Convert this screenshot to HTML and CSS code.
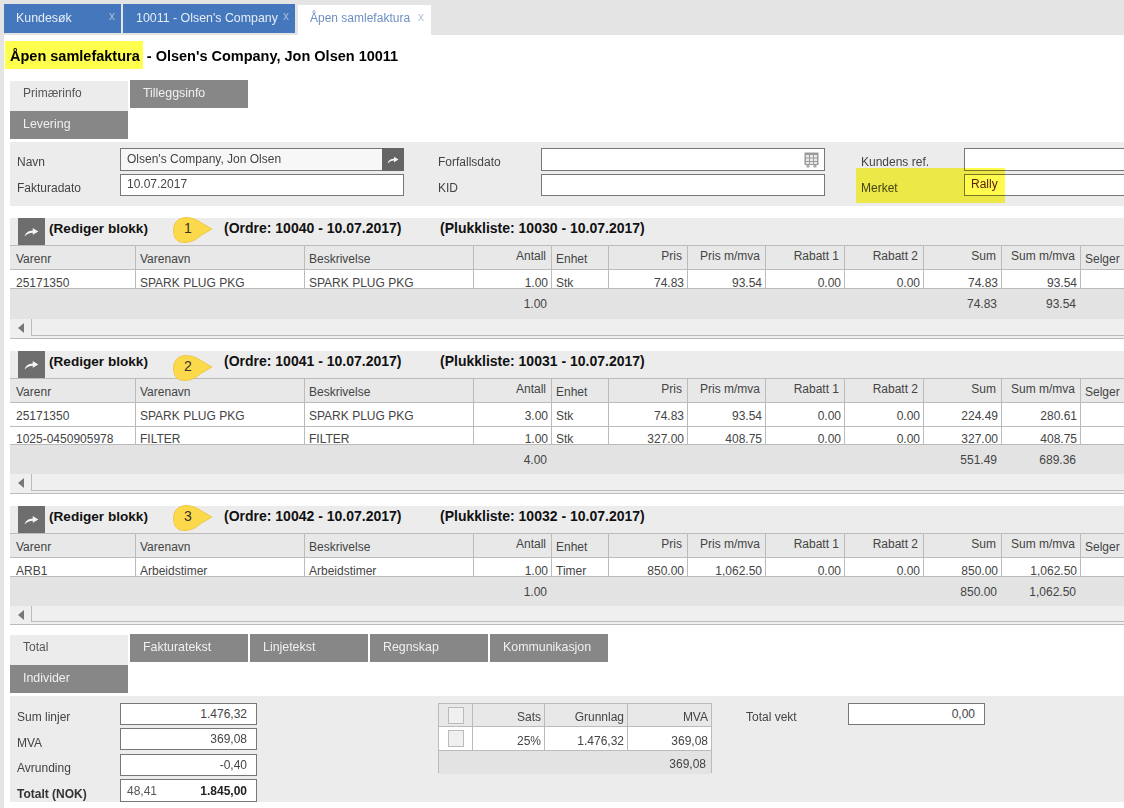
FILE: index.html
```html
<!DOCTYPE html>
<html lang="no">
<head>
<meta charset="utf-8">
<title>Åpen samlefaktura</title>
<link rel="stylesheet" href="styles.css">
</head>
<body>
<nav class="topbar">
  <a class="ttab ttab-a">Kundesøk<span class="tx">x</span></a>
  <a class="ttab ttab-b">10011 - Olsen's Company<span class="tx">x</span></a>
  <a class="ttab ttab-on">Åpen samlefaktura<span class="tx">x</span></a>
</nav>
<main class="main">
  <h1 class="title"><span class="mark">Åpen samlefaktura</span> - Olsen's Company, Jon Olsen 10011</h1>

  <div class="subtabs subtabs-top">
    <a class="stab stab-on">Primærinfo</a>
    <a class="stab">Tilleggsinfo</a>
    <a class="stab">Levering</a>
  </div>

  <section class="panel form-top">
    <label class="lab">Navn</label>
    <div class="inp inp-grey"><span>Olsen's Company, Jon Olsen</span><span class="inp-btn"><svg class="arrow" viewBox="0 0 12 8"><path d="M.5 7.500C1.200 4.500 3.500 2.800 7 2.700V.8L11.500 3.500 7 6.200V4.500C4.500 4.500 2.500 5.500.5 7.500Z"/></svg></span></div>
    <label class="lab">Forfallsdato</label>
    <div class="inp inp-cal"><svg class="cal" viewBox="0 0 15 16"><path d="M.5 .5h14v12.500H.5z" fill="#9b9b9b"/><path d="M2 3h3v2.500H2zM6 3h3v2.500H6zM10 3h3v2.500h-3zM2 6.500h3V9H2zM6 6.500h3V9H6zM10 6.500h3V9h-3zM2 10h3v2H2zM6 10h3v2H6zM10 10h3v2h-3z" fill="#e9e9e9"/><path d="M2.500 13h3v2.500h-3zM9.500 13h3v2.500h-3z" fill="#a8a8a8"/></svg></div>
    <label class="lab">Kundens ref.</label>
    <div class="inp"></div>
    <label class="lab">Fakturadato</label>
    <div class="inp">10.07.2017</div>
    <label class="lab">KID</label>
    <div class="inp"></div>
    <label class="lab">Merket</label>
    <div class="inp inp-pad">Rally</div>
    <div class="hilite"></div>
  </section>

  <section class="block">
    <header class="bhead">
      <span class="bbtn"><svg class="arrow" viewBox="0 0 12 8"><path d="M.5 7.500C1.200 4.500 3.500 2.800 7 2.700V.8L11.500 3.500 7 6.200V4.500C4.500 4.500 2.500 5.500.5 7.500Z"/></svg></span>
      <b class="bt bt-edit">(Rediger blokk)</b>
      <b class="bt bt-ord">(Ordre: 10040 - 10.07.2017)</b>
      <b class="bt">(Plukkliste: 10030 - 10.07.2017)</b>
      <span class="call call-1"><svg class="call-shape" viewBox="0 0 40 26"><path d="M13 .5C18 .5 23 2 27 5L39 12 27 19C23 23.500 17 25.500 11 25.500 4 25.500 .5 21 .5 13 .5 6 5 .5 13 .5Z"/></svg><span class="call-n">1</span></span>
    </header>
    <div class="row row-h">
      <span class="c">Varenr</span><span class="c">Varenavn</span><span class="c">Beskrivelse</span><span class="c r up">Antall</span><span class="c">Enhet</span><span class="c r up">Pris</span><span class="c r up">Pris m/mva</span><span class="c r up">Rabatt 1</span><span class="c r up">Rabatt 2</span><span class="c r up">Sum</span><span class="c r up">Sum m/mva</span><span class="c">Selger</span>
    </div>
    <div class="row row-cut">
      <span class="c">25171350</span><span class="c">SPARK PLUG PKG</span><span class="c">SPARK PLUG PKG</span><span class="c n">1.00</span><span class="c">Stk</span><span class="c n">74.83</span><span class="c n">93.54</span><span class="c n">0.00</span><span class="c n">0.00</span><span class="c n">74.83</span><span class="c n">93.54</span><span class="c"></span>
    </div>
    <div class="row row-f">
      <span class="f"></span><span class="f"></span><span class="f"></span><span class="f r">1.00</span><span class="f"></span><span class="f"></span><span class="f"></span><span class="f"></span><span class="f"></span><span class="f r">74.83</span><span class="f r">93.54</span><span class="f"></span>
    </div>
    <div class="scroll"><span class="sarrow"></span><span class="strack"></span></div>
  </section>

  <section class="block block-2">
    <header class="bhead">
      <span class="bbtn"><svg class="arrow" viewBox="0 0 12 8"><path d="M.5 7.500C1.200 4.500 3.500 2.800 7 2.700V.8L11.500 3.500 7 6.200V4.500C4.500 4.500 2.500 5.500.5 7.500Z"/></svg></span>
      <b class="bt bt-edit">(Rediger blokk)</b>
      <b class="bt bt-ord">(Ordre: 10041 - 10.07.2017)</b>
      <b class="bt">(Plukkliste: 10031 - 10.07.2017)</b>
      <span class="call call-2"><svg class="call-shape" viewBox="0 0 40 26"><path d="M13 .5C18 .5 23 2 27 5L39 12 27 19C23 23.500 17 25.500 11 25.500 4 25.500 .5 21 .5 13 .5 6 5 .5 13 .5Z"/></svg><span class="call-n">2</span></span>
    </header>
    <div class="row row-h">
      <span class="c">Varenr</span><span class="c">Varenavn</span><span class="c">Beskrivelse</span><span class="c r up">Antall</span><span class="c">Enhet</span><span class="c r up">Pris</span><span class="c r up">Pris m/mva</span><span class="c r up">Rabatt 1</span><span class="c r up">Rabatt 2</span><span class="c r up">Sum</span><span class="c r up">Sum m/mva</span><span class="c">Selger</span>
    </div>
    <div class="row row-b">
      <span class="c">25171350</span><span class="c">SPARK PLUG PKG</span><span class="c">SPARK PLUG PKG</span><span class="c n">3.00</span><span class="c">Stk</span><span class="c n">74.83</span><span class="c n">93.54</span><span class="c n">0.00</span><span class="c n">0.00</span><span class="c n">224.49</span><span class="c n">280.61</span><span class="c"></span>
    </div>
    <div class="row row-cut row-cut-short">
      <span class="c">1025-0450905978</span><span class="c">FILTER</span><span class="c">FILTER</span><span class="c n">1.00</span><span class="c">Stk</span><span class="c n">327.00</span><span class="c n">408.75</span><span class="c n">0.00</span><span class="c n">0.00</span><span class="c n">327.00</span><span class="c n">408.75</span><span class="c"></span>
    </div>
    <div class="row row-f">
      <span class="f"></span><span class="f"></span><span class="f"></span><span class="f r">4.00</span><span class="f"></span><span class="f"></span><span class="f"></span><span class="f"></span><span class="f"></span><span class="f r">551.49</span><span class="f r">689.36</span><span class="f"></span>
    </div>
    <div class="scroll"><span class="sarrow"></span><span class="strack"></span></div>
  </section>

  <section class="block block-3">
    <header class="bhead">
      <span class="bbtn"><svg class="arrow" viewBox="0 0 12 8"><path d="M.5 7.500C1.200 4.500 3.500 2.800 7 2.700V.8L11.500 3.500 7 6.200V4.500C4.500 4.500 2.500 5.500.5 7.500Z"/></svg></span>
      <b class="bt bt-edit">(Rediger blokk)</b>
      <b class="bt bt-ord">(Ordre: 10042 - 10.07.2017)</b>
      <b class="bt">(Plukkliste: 10032 - 10.07.2017)</b>
      <span class="call call-3"><svg class="call-shape" viewBox="0 0 40 26"><path d="M13 .5C18 .5 23 2 27 5L39 12 27 19C23 23.500 17 25.500 11 25.500 4 25.500 .5 21 .5 13 .5 6 5 .5 13 .5Z"/></svg><span class="call-n">3</span></span>
    </header>
    <div class="row row-h">
      <span class="c">Varenr</span><span class="c">Varenavn</span><span class="c">Beskrivelse</span><span class="c r up">Antall</span><span class="c">Enhet</span><span class="c r up">Pris</span><span class="c r up">Pris m/mva</span><span class="c r up">Rabatt 1</span><span class="c r up">Rabatt 2</span><span class="c r up">Sum</span><span class="c r up">Sum m/mva</span><span class="c">Selger</span>
    </div>
    <div class="row row-cut">
      <span class="c">ARB1</span><span class="c">Arbeidstimer</span><span class="c">Arbeidstimer</span><span class="c n">1.00</span><span class="c">Timer</span><span class="c n">850.00</span><span class="c n">1,062.50</span><span class="c n">0.00</span><span class="c n">0.00</span><span class="c n">850.00</span><span class="c n">1,062.50</span><span class="c"></span>
    </div>
    <div class="row row-f">
      <span class="f"></span><span class="f"></span><span class="f"></span><span class="f r">1.00</span><span class="f"></span><span class="f"></span><span class="f"></span><span class="f"></span><span class="f"></span><span class="f r">850.00</span><span class="f r">1,062.50</span><span class="f"></span>
    </div>
    <div class="scroll"><span class="sarrow"></span><span class="strack"></span></div>
  </section>

  <div class="subtabs subtabs-bottom">
    <a class="stab stab-on">Total</a>
    <a class="stab">Fakturatekst</a>
    <a class="stab">Linjetekst</a>
    <a class="stab">Regnskap</a>
    <a class="stab">Kommunikasjon</a>
    <a class="stab">Individer</a>
  </div>

  <section class="panel totals">
    <div class="tot-col">
      <label class="lab">Sum linjer</label><div class="inp r">1.476,32</div>
      <label class="lab lab-2">MVA</label><div class="inp r">369,08</div>
      <label class="lab lab-3">Avrunding</label><div class="inp r inp-3">-0,40</div>
      <label class="lab lab-b">Totalt (NOK)</label><div class="inp inp-split"><span>48,41</span><b>1.845,00</b></div>
    </div>
    <div class="vat">
      <span class="v vh"><i class="cb"></i></span><span class="v vh r">Sats</span><span class="v vh r">Grunnlag</span><span class="v vh r">MVA</span>
      <span class="v"><i class="cb"></i></span><span class="v r">25%</span><span class="v r">1.476,32</span><span class="v r">369,08</span>
      <span class="vf">369,08</span>
    </div>
    <div class="weight">
      <label class="lab">Total vekt</label><div class="inp r">0,00</div>
    </div>
  </section>
</main>
</body>
</html>
```
FILE: styles.css
```css
* { box-sizing: border-box; }
html, body { margin: 0; height: 808px; overflow: hidden; }
body {
  background: #fff;
  border-left: 4px solid #e4e4e4;
  font: 12px/16px "Liberation Sans", Arial, sans-serif;
  color: #444;
}

/* top tabs */
.topbar {
  display: flex;
  align-items: flex-start;
  height: 35px;
  padding-top: 4px;
  background: #e4e4e4;
}
.ttab {
  position: relative;
  display: block;
  height: 29px;
  background: #4577bc;
  color: #e6edf7;
  line-height: 28px;
  padding-left: 12px;
  margin-right: 2px;
  font-size: 12.4px;
}
.ttab-a { width: 117px; }
.ttab-b { width: 172px; padding-left: 13px; margin-right: 3px; }
.ttab-on {
  width: 133px;
  height: 30px;
  margin-top: 1px;
  background: #fff;
  color: #6f8fc4;
  padding-left: 12px;
  line-height: 26px;
  font-size: 12px;
}
.tx {
  position: absolute;
  right: 6px;
  top: -2px;
  font-size: 12px;
  color: #a9bbdb;
}
.ttab-on .tx { right: 7px; top: -1px; color: #b3c4e0; }

/* main */
.main { padding-left: 6px; overflow: hidden; height: 773px; }
.title {
  margin: 6px 0 11px -5px;
  height: 28px;
  font-size: 14.5px;
  line-height: 30px;
  font-weight: bold;
  color: #000;
  white-space: nowrap;
}
.mark {
  display: inline-block;
  height: 28px;
  padding: 0 3px 0 5px;
  background: #ffff4d;
  vertical-align: top;
}

/* sub tabs */
.subtabs { display: flex; flex-wrap: wrap; align-items: flex-start; column-gap: 2px; }
.subtabs-top { width: 238px; }
.subtabs-bottom { width: 600px; margin-top: 9px; }
.stab {
  display: block;
  width: 118px;
  height: 28px;
  padding-left: 13px;
  background: #878787;
  color: #f0f0f0;
  line-height: 26px;
  font-size: 12.4px;
}
.stab-on {
  height: 30px;
  margin-top: 1px;
  background: #ececec;
  color: #555;
  line-height: 24px;
  font-size: 12px;
}

/* panels */
.panel { background: #ececec; margin-top: 3px; }
.form-top {
  position: relative;
  display: grid;
  grid-template-columns: 103px 284px 103px 284px 103px 284px;
  grid-template-rows: 23px 22px;
  row-gap: 3px;
  height: 64px;
  width: 1114px;
  padding: 6px 0 0 7px;
  overflow: hidden;
}
.form-top .lab:nth-of-type(2),
.form-top .lab:nth-of-type(5) { margin-left: 34px; margin-right: -34px; }
.form-top .lab:nth-of-type(3),
.form-top .lab:nth-of-type(6) { margin-left: 70px; margin-right: -70px; }
.form-top .inp:nth-of-type(2),
.form-top .inp:nth-of-type(5) { margin-left: 34px; margin-right: -34px; }
.form-top .inp:nth-of-type(3),
.form-top .inp:nth-of-type(6) { margin-left: 70px; margin-right: -70px; }

.lab {
  display: flex;
  align-items: center;
  padding-top: 5px;
  white-space: nowrap;
  color: #444;
}
.lab-b { font-weight: bold; color: #333; position: relative; top: 2px; }
.lab-2 { position: relative; top: 1px; }
.lab-3 { position: relative; top: 1px; }
.inp {
  display: flex;
  align-items: center;
  position: relative;
  height: 100%;
  padding: 0 0 2px 6px;
  background: #fff;
  border: 1px solid #777;
  color: #444;
  white-space: nowrap;
}
.inp-grey { background: #f7f7f7; }
.inp-btn {
  position: absolute;
  right: -1px;
  top: -1px;
  bottom: -1px;
  width: 22px;
  display: flex;
  align-items: center;
  justify-content: center;
  background: #646464;
}
.inp-cal { justify-content: flex-end; padding: 0 5px 0 0; }
.cal { width: 15px; height: 16px; }
.inp-pad { color: #5a2020; }
.arrow { width: 12px; height: 8px; fill: #f4f4f4; }
.bbtn .arrow { width: 15px; height: 10px; }
.hilite {
  position: absolute;
  left: 846px;
  top: 26px;
  width: 149px;
  height: 35px;
  background: #fffb4c;
  mix-blend-mode: multiply;
}

/* order blocks */
.block {
  position: relative;
  width: 1114px;
  margin-top: 12px;
  background: #efefef;
  border-bottom: 1px solid #bbb;
}
.bhead {
  position: relative;
  display: flex;
  align-items: flex-start;
  height: 28px;
  padding-left: 8px;
  background: #ececec;
  border-bottom: 1px solid #bbb;
}
.bbtn {
  flex: none;
  display: flex;
  align-items: center;
  justify-content: center;
  width: 27px;
  height: 27px;
  margin-right: 4px;
  background: #6e6e6e;
}
.bt { font-size: 14px; line-height: 21px; color: #111; white-space: nowrap; }
.bt-edit { width: 175px; font-size: 13.6px; }
.bt-ord { width: 216px; }
.call { position: absolute; left: 163px; width: 40px; height: 26px; z-index: 1; }
.call-1 { top: -1px; }
.call-2 { top: 4px; }
.call-3 { top: -1px; }
.call-shape { position: absolute; inset: 0; width: 100%; height: 100%; fill: #fcd94a; stroke: #e8bf35; stroke-width: .7; }
.call-n {
  position: absolute;
  left: 0;
  top: 3px;
  width: 30px;
  text-align: center;
  font-size: 14px;
  color: #333;
}

.row {
  display: grid;
  grid-template-columns: 126px 169px 169px 78px 57px 79px 78px 79px 79px 78px 79px 79px;
  width: 1150px;
  white-space: nowrap;
}
.row-h { height: 24px; background: #e8e8e8; border-bottom: 1px solid #bbb; }
.row-b { height: 24px; background: #fff; border-bottom: 1px solid #bbb; }
.row-cut { height: 19px; background: #fff; overflow: hidden; border-bottom: 1px solid #bbb; }
.row-cut-short { height: 18px; }
.row-cut-short .c { line-height: 24px; }
.row-f { height: 30px; background: #e3e3e3; }
.block-2 .row-f, .block-3 .row-f { height: 29px; }
.c {
  padding-left: 4px;
  padding-right: 5px;
  border-right: 1px solid #bbb;
  line-height: 25px;
  height: 24px;
}
.c:first-child { padding-left: 6px; }
.row-h .c { line-height: 27px; }
.row-h .up { line-height: 20px; }
.row-b .c, .row-cut:not(.row-cut-short) .c { line-height: 26px; }
.r { text-align: right; justify-content: flex-end; }
.n { text-align: right; padding-right: 3px; }
.f { padding-right: 5px; line-height: 30px; }
.scroll { display: flex; height: 19px; background: #efefef; }
.block-3 .scroll { height: 18px; }
.sarrow { position: relative; flex: none; width: 21px; }
.sarrow::before {
  content: "";
  position: absolute;
  left: 8px;
  top: 4px;
  border: 5px solid transparent;
  border-left-width: 0;
  border-right: 6px solid #777;
}
.strack { flex: 1; margin-bottom: 2px; border-left: 1px solid #bbb; border-bottom: 1px solid #bbb; }

/* totals */
.totals {
  display: flex;
  align-items: flex-start;
  height: 106px;
  width: 1114px;
  padding: 7px 0 0 7px;
}
.tot-col {
  flex: none;
  display: grid;
  grid-template-columns: 103px 137px;
  grid-template-rows: 22px 22px 22px 23px;
  row-gap: 3px;
  margin-right: 181px;
}
.totals .inp { padding: 0 9px 0 6px; }
.totals .inp.r { justify-content: flex-end; }
.inp-3 { top: 1px; }
.totals .inp-split { justify-content: space-between; color: #555; top: 1px; }
.inp-split b { color: #222; }
.vat {
  flex: none;
  display: grid;
  grid-template-columns: 34px 72px 83px 83px;
  grid-template-rows: 23px 24px 23px;
  width: 274px;
  height: 70px;
  margin-right: 34px;
  border: 1px solid #bbb;
  background: #fff;
}
.v {
  display: flex;
  align-items: center;
  padding: 4px 3px 0 2px;
  border-right: 1px solid #bbb;
  border-bottom: 1px solid #bbb;
}
.vh { background: #e8e8e8; }
.v:nth-child(4n) { border-right: 0; }
.v:nth-child(4n+1) { justify-content: center; padding: 0; }
.cb { display: block; width: 16px; height: 17px; border: 1px solid #bbb; background: #f0f0f0; }
.vf {
  grid-column: 1 / -1;
  padding-right: 5px;
  text-align: right;
  background: #e3e3e3;
  line-height: 27px;
}
.weight {
  flex: none;
  display: grid;
  grid-template-columns: 102px 137px;
  grid-template-rows: 22px;
}
```
